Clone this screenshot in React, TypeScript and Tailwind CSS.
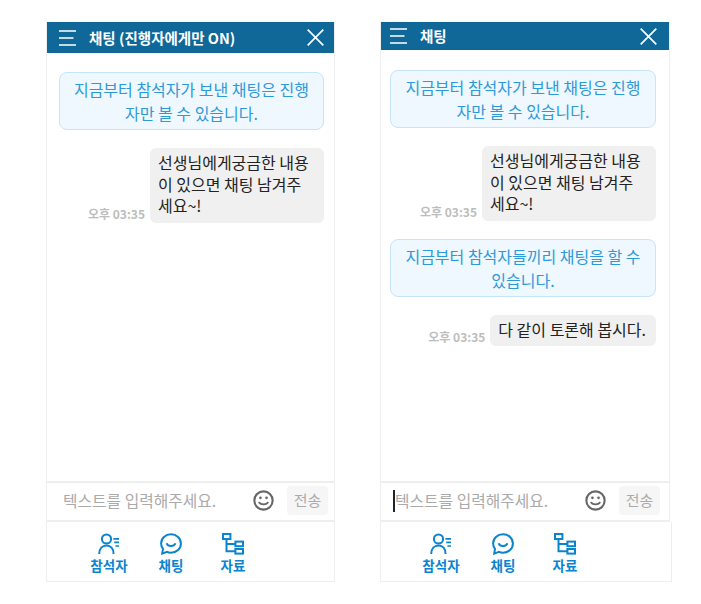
import type { ReactNode } from "react"

function MenuIcon() {
  return (
    <svg width="17" height="16" viewBox="0 0 17 16" fill="none" stroke="white" strokeWidth="1.5">
      <path d="M0 1H17M0 8H14.5M0 15H17" />
    </svg>
  )
}

function CloseIcon() {
  return (
    <svg width="17" height="17" viewBox="0 0 17 17" fill="none" stroke="white" strokeWidth="1.7">
      <path d="M0.7 0.7L16.3 16.3M16.3 0.7L0.7 16.3" />
    </svg>
  )
}

function SmileIcon() {
  return (
    <svg width="21" height="21" viewBox="0 0 22 22" fill="none" stroke="#666" strokeWidth="2.2">
      <circle cx="11" cy="11" r="9.6" />
      <path d="M6.2 12.6C7.4 15.8 14.6 15.8 15.8 12.6" strokeWidth="1.9" />
      <circle cx="7.8" cy="8.2" r="1.4" fill="#666" stroke="none" />
      <circle cx="14.2" cy="8.2" r="1.4" fill="#666" stroke="none" />
    </svg>
  )
}

function PeopleIcon() {
  return (
    <svg width="22" height="22" viewBox="0 0 22 22" fill="none" stroke="#0b84cf" strokeWidth="2">
      <circle cx="8.5" cy="6" r="4.6" />
      <path d="M1.2 21C1.2 15.5 4.4 12.4 8.5 12.4C12.6 12.4 15.6 15.5 15.6 21" />
      <path d="M15.4 5.8H21M16.2 9.4H21M17.4 13H21" strokeWidth="1.7" />
    </svg>
  )
}

function ChatIcon() {
  return (
    <svg width="22" height="22" viewBox="0 0 22 22" fill="none" stroke="#0b84cf" strokeWidth="2">
      <path d="M11 1.2C5.4 1.2 1.1 5.3 1.1 10.5C1.1 12.6 1.8 14.4 3 15.9L2.2 20.6L7 18.9C8.2 19.5 9.6 19.8 11 19.8C16.6 19.8 20.9 15.7 20.9 10.5C20.9 5.3 16.6 1.2 11 1.2Z" />
      <path d="M6.6 10.2C7.8 14 14.2 14 15.4 10.2" />
    </svg>
  )
}

function FilesIcon() {
  return (
    <svg width="22" height="22" viewBox="0 0 22 22" fill="none" stroke="#0b84cf" strokeWidth="2">
      <rect x="1" y="1" width="7.4" height="5" />
      <rect x="13.4" y="8.6" width="7.6" height="4.6" />
      <rect x="13.4" y="16" width="7.6" height="4.6" />
      <path d="M4.5 6V18.3H13.4M4.5 10.9H13.4" />
    </svg>
  )
}

function Notice({ children }: { children: ReactNode }) {
  return (
    <div className="rounded-lg border border-[#c5e5fb] bg-[#eff8ff] px-3 py-[4px] text-center text-[16px] leading-[24px] text-[#2d9ad8]">
      {children}
    </div>
  )
}

function Bubble({ time, children }: { time: string; children: ReactNode }) {
  return (
    <div className="flex items-end justify-end gap-[5px]">
      <span className="pb-[2px] text-[12px] font-bold leading-[14px] text-[#bdbdbd]">{time}</span>
      <div className="rounded-md bg-[#f0f0f0] pb-[6px] pl-2 pr-[10px] pt-[4px] text-[16px] leading-[21.5px] text-[#222]">
        {children}
      </div>
    </div>
  )
}

function Tab({ icon, label }: { icon: ReactNode; label: string }) {
  return (
    <div className="flex w-[62px] flex-col items-center">
      {icon}
      <span className="mt-[2px] text-[13.5px] font-bold leading-[16px] text-[#0b84cf]">{label}</span>
    </div>
  )
}

function Panel({
  title,
  width,
  headerClass,
  bodyClass,
  inputClass,
  tabsClass,
  cursor,
  children,
}: {
  title: string
  width: string
  headerClass: string
  bodyClass: string
  inputClass: string
  tabsClass: string
  cursor?: boolean
  children: ReactNode
}) {
  return (
    <div className={`flex h-[560px] flex-col ${width}`}>
      <div className="shrink-0 border-x border-[#eeeeee]">
        <div className={`flex items-center bg-[#106898] text-white ${headerClass}`}>
          <MenuIcon />
          <span className="ml-[13px] flex-1 text-[14.5px] font-bold">{title}</span>
          <CloseIcon />
        </div>
      </div>
      <div className={`flex flex-1 flex-col gap-[18px] border-x border-[#eeeeee] ${bodyClass}`}>{children}</div>
      <div className={`flex h-[41px] shrink-0 items-center border-x border-y-2 border-[#eeeeee] pb-[2px] ${inputClass}`}>
        <div className="relative flex-1 text-[15.8px] text-[#aaaaaa]">
          {cursor && <span className="absolute -left-[2px] top-px h-[22px] w-[2px] bg-[#222]" />}
          텍스트를 입력해주세요.
        </div>
        <SmileIcon />
        <div className="ml-[13px] flex h-[29px] w-[41px] items-center justify-center rounded bg-[#f6f6f6] text-[15px] text-[#aaaaaa]">
          전송
        </div>
      </div>
      <div className={`flex h-[60px] shrink-0 items-start border-x border-b border-[#eeeeee] pt-[11px] ${tabsClass}`}>
        <Tab icon={<PeopleIcon />} label="참석자" />
        <Tab icon={<ChatIcon />} label="채팅" />
        <Tab icon={<FilesIcon />} label="자료" />
      </div>
    </div>
  )
}

export default function App() {
  return (
    <div
      className="flex h-[604px] w-[701px] gap-[45px] bg-white pl-[46px] pt-[22px]"
      style={{ fontFamily: '"Noto Sans CJK KR", "Liberation Sans", sans-serif' }}
    >
      <Panel
        title="채팅 (진행자에게만 ON)"
        width="w-[289px]"
        headerClass="h-[31px] pl-[12px] pr-[10px]"
        bodyClass="pl-3 pr-[10px] pt-[19px]"
        inputClass="pl-4 pr-[6px]"
        tabsClass="pl-[31px]"
      >
        <Notice>지금부터 참석자가 보낸 채팅은 진행자만 볼 수 있습니다.</Notice>
        <Bubble time="오후 03:35">
          <div className="w-[156px]">선생님에게궁금한 내용이 있으면 채팅 남겨주세요~!</div>
        </Bubble>
      </Panel>
      <Panel
        title="채팅"
        width="w-[290px]"
        headerClass="h-[28px] pl-[9px] pr-[12px]"
        bodyClass="pl-[9px] pr-[13px] pt-[20px]"
        inputClass="pl-[14px] pr-[9px]"
        tabsClass="-mr-[2px] pl-[29px]"
        cursor
      >
        <Notice>지금부터 참석자가 보낸 채팅은 진행자만 볼 수 있습니다.</Notice>
        <Bubble time="오후 03:35">
          <div className="w-[156px]">선생님에게궁금한 내용이 있으면 채팅 남겨주세요~!</div>
        </Bubble>
        <Notice>지금부터 참석자들끼리 채팅을 할 수 있습니다.</Notice>
        <Bubble time="오후 03:35">다 같이 토론해 봅시다.</Bubble>
      </Panel>
    </div>
  )
}
